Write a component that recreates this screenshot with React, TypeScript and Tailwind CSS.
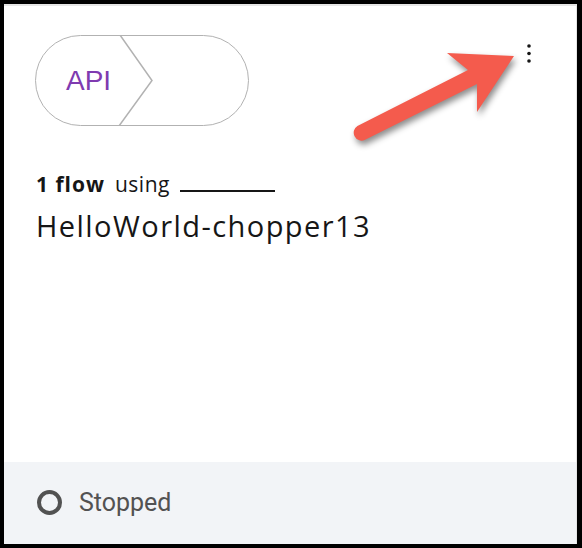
import { useState } from 'react';

function KebabIcon() {
  return (
    <svg width="6" height="22" viewBox="0 0 6 22" className="text-[#161616]">
      <circle cx="3" cy="3" r="1.8" fill="currentColor" />
      <circle cx="3" cy="10.5" r="1.8" fill="currentColor" />
      <circle cx="3" cy="18" r="1.8" fill="currentColor" />
    </svg>
  );
}

function ApiPill() {
  return (
    <div className="relative w-[214px] h-[91px] rounded-full border-[1.5px] border-[#b2b2b2] flex items-center">
      <span className="pl-[30px] text-[28px] leading-none text-[#7f3bb0] font-['Liberation_Sans',Arial,sans-serif]">
        API
      </span>
      <svg
        className="absolute left-[82px] top-[-1px]"
        width="36"
        height="91"
        viewBox="0 0 36 91"
        fill="none"
      >
        <path d="M2 0 L34 45.5 L1 91" stroke="#b2b2b2" strokeWidth="1.5" />
      </svg>
    </div>
  );
}

function Pointer() {
  return (
    <svg
      className="absolute left-0 top-0 pointer-events-none drop-shadow-[2px_4px_3px_rgba(0,0,0,0.45)]"
      width="582"
      height="548"
      viewBox="0 0 582 548"
    >
      <path
        d="M357.4 125.9 L468 70 L447 53 L514 56 L477 112 L477 84 L364.6 140.1 A8 8 0 0 1 357.4 125.9 Z"
        fill="#f45b4d"
      />
    </svg>
  );
}

export default function App() {
  const [running] = useState(false);

  return (
    <div className="relative w-[582px] h-[548px] bg-black pl-[4px] pt-[4px] pr-[5px] pb-[4px]">
      <div className="h-full flex flex-col bg-white border-t-2 border-r border-[#e6e6e6]">
        {/* Body */}
        <div className="flex-1 pl-[31px] pr-[44px] pt-[29px]">
          <div className="flex items-start justify-between">
            <ApiPill />
            <div className="pt-[8px]">
              <KebabIcon />
            </div>
          </div>

          <div className="mt-[45px] pl-[1px] text-[21px] leading-[26px] text-[#161616] font-['Open_Sans',sans-serif] flex items-end">
            <span className="font-bold tracking-[1px]">1 flow</span>
            <span className="ml-[10px] tracking-[0.5px]">using</span>
            <span className="ml-[10px] mb-[5px] w-[95px] border-b-2 border-[#161616]" />
          </div>
          <div className="mt-[11px] pl-[1px] text-[29px] leading-[36px] tracking-[1.45px] text-[#161616] font-['Open_Sans',sans-serif]">
            HelloWorld-chopper13
          </div>
        </div>

        {/* Footer */}
        <div className="h-[82px] bg-[#f2f4f7] flex items-center gap-[17px] pl-[33px] pb-[2px]">
          <span className="w-[25px] h-[25px] rounded-full border-[4px] border-[#525252]" />
          <span className="text-[25px] leading-none text-[#525252] font-['Roboto',sans-serif]">
            {running ? 'Running' : 'Stopped'}
          </span>
        </div>
      </div>
      <Pointer />
    </div>
  );
}
